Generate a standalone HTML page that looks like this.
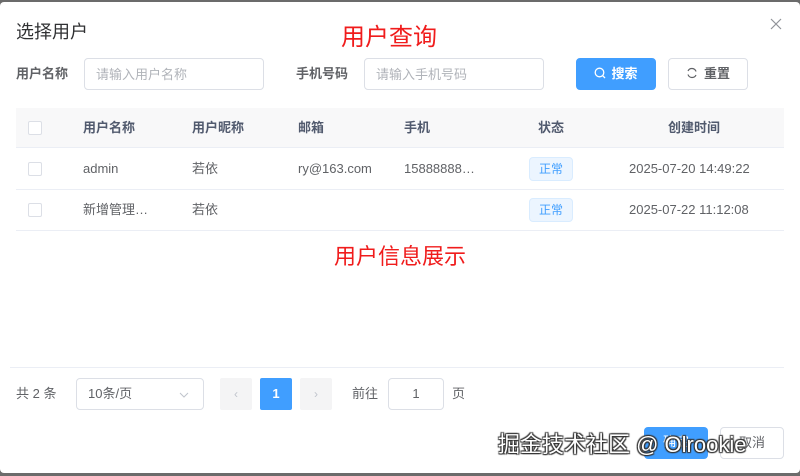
<!DOCTYPE html>
<html><head><meta charset="utf-8"><style>
*{box-sizing:border-box;margin:0;padding:0}
body{width:800px;height:476px;background:#6b6b6b;font-family:"Liberation Sans","Noto Sans CJK SC",sans-serif;position:relative;overflow:hidden;color:#606266}
.dlg{position:absolute;left:0;top:2px;width:800px;height:471px;background:#fff;border-radius:4px}
.a{position:absolute;white-space:nowrap;line-height:20px}
.inp{position:absolute;border:1px solid #dcdfe6;border-radius:4px;height:32px;font-size:13px;color:#b0b3b9;padding-left:11px;line-height:30px}
.lbl{font-size:13px;font-weight:bold;color:#606266}
.th{font-size:13px;font-weight:bold;color:#515a6e}
.td{font-size:13px;color:#606266}
.cb{position:absolute;width:14px;height:14px;border:1px solid #dcdfe6;border-radius:2px;background:#fff}
.hl{position:absolute;left:16px;width:768px;height:1px;background:#ebeef5}
.tag{position:absolute;left:529px;width:44px;height:24px;background:#ecf5ff;border:1px solid #d9ecff;border-radius:4px;color:#409eff;font-size:12px;text-align:center;line-height:22px}
.btn{position:absolute;border-radius:4px;height:32px;font-size:13px;text-align:center;line-height:30px}
</style></head><body>
<div class="dlg">
<div class="a" style="left:16px;top:18px;font-size:18px;line-height:24px;color:#303133">选择用户</div>
<div class="a" style="left:341px;top:20px;font-size:24px;line-height:32px;color:#f01c1c">用户查询</div>
<svg class="a" style="left:770px;top:16px" width="12" height="12" viewBox="0 0 12 12"><path d="M1 1L11 11M11 1L1 11" stroke="#909399" stroke-width="1.2"/></svg>

<div class="a lbl" style="left:16px;top:62px">用户名称</div>
<div class="inp" style="left:84px;top:56px;width:180px;line-height:32px">请输入用户名称</div>
<div class="a lbl" style="left:296px;top:62px">手机号码</div>
<div class="inp" style="left:364px;top:56px;width:180px;line-height:32px">请输入手机号码</div>
<div class="btn" style="left:576px;top:56px;width:80px;background:#409eff;color:#fff;border:1px solid #409eff;font-weight:bold"><svg width="12" height="12" viewBox="0 0 12 12" style="vertical-align:-1px;margin-right:5px"><circle cx="5.5" cy="5.5" r="4.3" fill="none" stroke="#fff" stroke-width="1.3"/><path d="M8.7 8.7L11 11" stroke="#fff" stroke-width="1.3"/></svg>搜索</div>
<div class="btn" style="left:668px;top:56px;width:80px;border:1px solid #dcdfe6;color:#606266;font-weight:bold"><svg width="12" height="12" viewBox="0 0 12 12" style="vertical-align:-1px;margin-right:6px"><path d="M10 4.5A4.3 4.3 0 0 0 2 4M2 7.5A4.3 4.3 0 0 0 10 8" fill="none" stroke="#606266" stroke-width="1.2"/></svg>重置</div>

<div class="a" style="left:16px;top:106px;width:768px;height:40px;background:#f8f8f9"></div>
<div class="hl" style="top:145px"></div>
<div class="cb" style="left:28px;top:119px"></div>
<div class="a th" style="left:83px;top:116px">用户名称</div>
<div class="a th" style="left:192px;top:116px">用户昵称</div>
<div class="a th" style="left:298px;top:116px">邮箱</div>
<div class="a th" style="left:404px;top:116px">手机</div>
<div class="a th" style="left:538px;top:116px">状态</div>
<div class="a th" style="left:668px;top:116px">创建时间</div>

<div class="cb" style="left:28px;top:160px"></div>
<div class="a td" style="left:83px;top:157px">admin</div>
<div class="a td" style="left:192px;top:157px">若依</div>
<div class="a td" style="left:298px;top:157px">ry@163.com</div>
<div class="a td" style="left:404px;top:157px">15888888…</div>
<div class="tag" style="top:155px">正常</div>
<div class="a td" style="left:629px;top:157px">2025-07-20 14:49:22</div>
<div class="hl" style="top:187px"></div>

<div class="cb" style="left:28px;top:201px"></div>
<div class="a td" style="left:83px;top:198px">新增管理…</div>
<div class="a td" style="left:192px;top:198px">若依</div>
<div class="tag" style="top:196px">正常</div>
<div class="a td" style="left:629px;top:198px">2025-07-22 11:12:08</div>
<div class="hl" style="top:228px"></div>

<div class="a" style="left:334px;top:240px;font-size:22px;line-height:30px;color:#f01c1c">用户信息展示</div>

<div class="a" style="left:10px;top:365px;width:774px;height:1px;background:#ebeef5"></div>
<div class="a td" style="left:16px;top:382px">共 2 条</div>
<div class="inp" style="left:76px;top:376px;width:128px;color:#606266">10条/页<svg width="10" height="6" viewBox="0 0 10 6" style="position:absolute;right:14px;top:13px"><path d="M1 1L5 5L9 1" fill="none" stroke="#c0c4cc"/></svg></div>
<div class="a" style="left:220px;top:376px;width:32px;height:32px;background:#f4f4f5;border-radius:2px;color:#c0c4cc;text-align:center;line-height:32px;font-size:12px">‹</div>
<div class="a" style="left:260px;top:376px;width:32px;height:32px;background:#409eff;border-radius:2px;color:#fff;text-align:center;line-height:32px;font-size:13px;font-weight:bold">1</div>
<div class="a" style="left:300px;top:376px;width:32px;height:32px;background:#f4f4f5;border-radius:2px;color:#c0c4cc;text-align:center;line-height:32px;font-size:12px">›</div>
<div class="a td" style="left:352px;top:382px">前往</div>
<div class="inp" style="left:388px;top:376px;width:56px;color:#606266;padding:0;text-align:center">1</div>
<div class="a td" style="left:452px;top:382px">页</div>

<div class="btn" style="left:644px;top:425px;width:64px;background:#409eff;color:#fff">确定</div>
<div class="btn" style="left:720px;top:425px;width:64px;border:1px solid #dcdfe6;color:#606266">取消</div>
<div class="a" style="left:498px;top:428px;font-size:22px;line-height:30px;color:#fff;text-shadow:0 0 1px #333,1px 1px 1px #333,-1px -1px 1px #333,1px -1px 1px #333,-1px 1px 1px #333">掘金技术社区 @ Olrookie</div>
</div>
</body></html>
